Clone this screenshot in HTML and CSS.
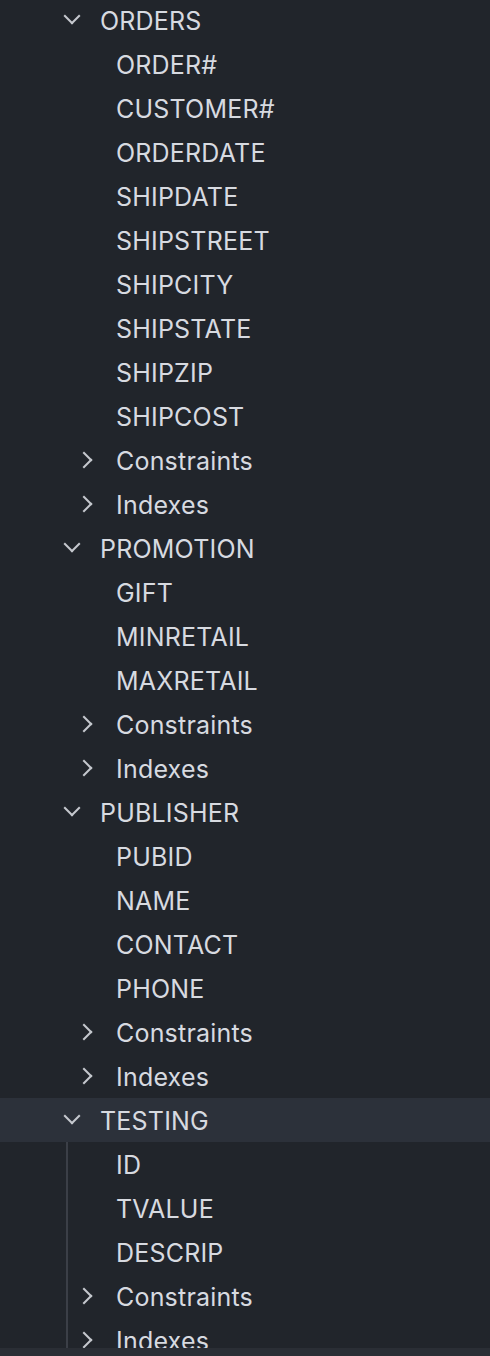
FILE: index.html
```html
<!DOCTYPE html>
<html>
<head>
<meta charset="utf-8">
<link rel="stylesheet" href="styles.css">
</head>
<body>
<div class="pane">
  <div class="tree">
    <div class="row l1"><span class="tw down"></span><span class="label">ORDERS</span></div>
    <div class="row leaf"><span class="label">ORDER#</span></div>
    <div class="row leaf"><span class="label">CUSTOMER#</span></div>
    <div class="row leaf"><span class="label">ORDERDATE</span></div>
    <div class="row leaf"><span class="label">SHIPDATE</span></div>
    <div class="row leaf"><span class="label">SHIPSTREET</span></div>
    <div class="row leaf"><span class="label">SHIPCITY</span></div>
    <div class="row leaf"><span class="label">SHIPSTATE</span></div>
    <div class="row leaf"><span class="label">SHIPZIP</span></div>
    <div class="row leaf"><span class="label">SHIPCOST</span></div>
    <div class="row l2"><span class="tw right"></span><span class="label">Constraints</span></div>
    <div class="row l2"><span class="tw right"></span><span class="label">Indexes</span></div>

    <div class="row l1"><span class="tw down"></span><span class="label">PROMOTION</span></div>
    <div class="row leaf"><span class="label">GIFT</span></div>
    <div class="row leaf"><span class="label">MINRETAIL</span></div>
    <div class="row leaf"><span class="label">MAXRETAIL</span></div>
    <div class="row l2"><span class="tw right"></span><span class="label">Constraints</span></div>
    <div class="row l2"><span class="tw right"></span><span class="label">Indexes</span></div>

    <div class="row l1"><span class="tw down"></span><span class="label">PUBLISHER</span></div>
    <div class="row leaf"><span class="label">PUBID</span></div>
    <div class="row leaf"><span class="label">NAME</span></div>
    <div class="row leaf"><span class="label">CONTACT</span></div>
    <div class="row leaf"><span class="label">PHONE</span></div>
    <div class="row l2"><span class="tw right"></span><span class="label">Constraints</span></div>
    <div class="row l2"><span class="tw right"></span><span class="label">Indexes</span></div>

    <div class="row l1 hover"><span class="tw down"></span><span class="label">TESTING</span></div>
    <div class="group guided">
      <div class="row leaf"><span class="label">ID</span></div>
      <div class="row leaf"><span class="label">TVALUE</span></div>
      <div class="row leaf"><span class="label">DESCRIP</span></div>
      <div class="row l2"><span class="tw right"></span><span class="label">Constraints</span></div>
      <div class="row l2"><span class="tw right"></span><span class="label">Indexes</span></div>
    </div>
  </div>
</div>
<div class="statusband"></div>
</body>
</html>
```

FILE: styles.css
```css
html, body {
  margin: 0;
  padding: 0;
  background: #21252b;
}
body {
  width: 490px;
  height: 1356px;
  overflow: hidden;
  font-family: Inter, "Liberation Sans", sans-serif;
  font-size: 25px;
  letter-spacing: 0.2px;
  color: #d7dae0;
}
.pane {
  height: 1348px;
  overflow: hidden;
}
.tree {
  margin-top: -2px;
  display: flex;
  flex-direction: column;
}
.group {
  display: flex;
  flex-direction: column;
}
.guided {
  background: linear-gradient(#3b3f47, #3b3f47) no-repeat 66px 0 / 2px 100%;
}
.row {
  height: 44px;
  display: flex;
  align-items: center;
  box-sizing: border-box;
  white-space: nowrap;
}
.row.hover {
  background: #2c313a;
}
.l1 { padding-left: 56px; }
.l2 { padding-left: 72px; }
.leaf { padding-left: 116px; }
.tw {
  width: 32px;
  height: 32px;
  margin-right: 12px;
  flex: none;
  position: relative;
}
.tw::before {
  content: "";
  position: absolute;
  width: 12px;
  height: 12px;
  border-right: 2px solid #c5c8ce;
  border-bottom: 2px solid #c5c8ce;
  box-sizing: border-box;
  left: 10px;
  top: 10px;
}
.tw.down::before {
  transform: translateY(-4px) rotate(45deg);
}
.tw.right::before {
  transform: translateX(-4px) rotate(-45deg);
}
.label {
  line-height: 44px;
  padding-top: 2px;
}
.statusband {
  height: 8px;
  background: #2a2e35;
}
```
